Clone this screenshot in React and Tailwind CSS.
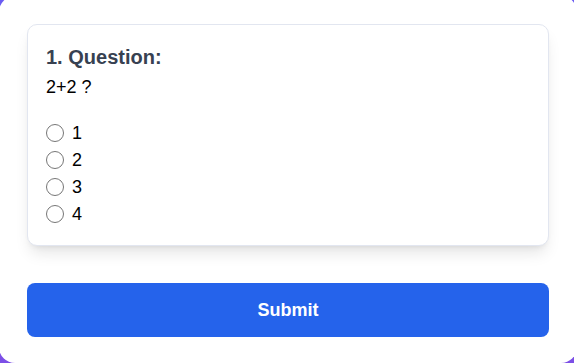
import React, { useState } from 'react';

const options = ['1', '2', '3', '4'];

export default function App() {
  const [answer, setAnswer] = useState('');

  return (
    <div className="h-screen overflow-hidden bg-gradient-to-b from-[#6a5cf2] to-[#7c4fe6] font-['Liberation_Sans',Arial,sans-serif]">
      <div className="-ml-px -mt-1 w-[578px] rounded-2xl bg-white px-7 pt-7 pb-[26px]">
        <div className="rounded-[10px] border border-[#e2e6f0] bg-white p-[18px] shadow-lg">
          <h2 className="text-xl leading-7 font-bold text-[#374151]">1. Question:</h2>
          <p className="mt-[2px] text-lg leading-7 text-black">2+2 ?</p>
          <div className="mt-[18px] flex flex-col">
            {options.map((opt) => (
              <label key={opt} className="flex h-[27px] items-center gap-[8px] text-lg text-black">
                <input
                  type="radio"
                  name="q1"
                  value={opt}
                  checked={answer === opt}
                  onChange={() => setAnswer(opt)}
                  className="h-[18px] w-[18px]"
                />
                {opt}
              </label>
            ))}
          </div>
        </div>
        <button className="mt-[37px] flex h-[54px] w-full items-center justify-center rounded-lg bg-[#2563eb] text-lg font-bold text-white">
          Submit
        </button>
      </div>
    </div>
  );
}
